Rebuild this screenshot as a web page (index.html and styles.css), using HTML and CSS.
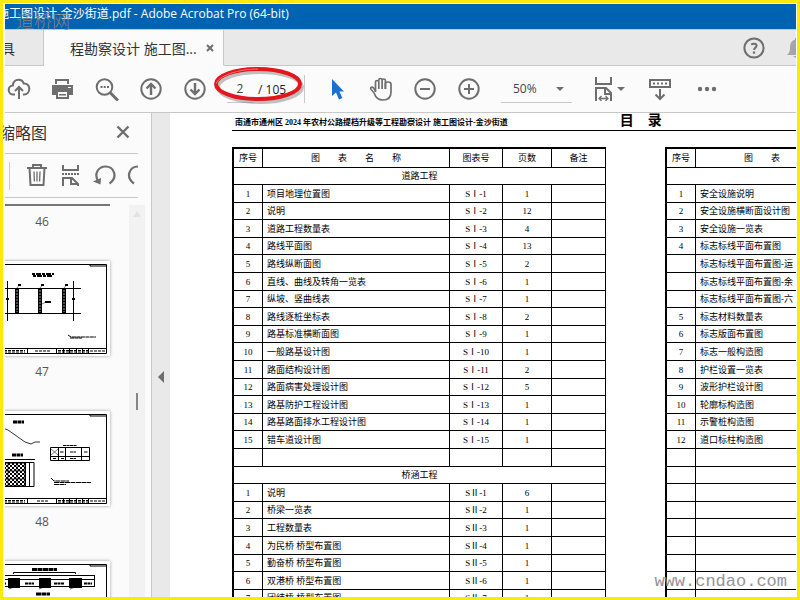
FILE: index.html
```html
<!doctype html>
<html lang="zh-CN">

<head>
    <meta charset="utf-8">
    <meta name="viewport" content="width=device-width, initial-scale=1">
    <title>施工图设计-金沙街道.pdf - Adobe Acrobat Pro (64-bit)</title>
    <link rel="stylesheet" href="styles.css">
</head>

<body>
    <div class="window">
        <header class="titlebar">施工图设计-金沙街道.pdf - Adobe Acrobat Pro (64-bit)</header>

        <nav class="tabs">
            <button type="button" class="tab tab-tools">具</button>
            <div class="tab tab-active">
                <span>程勘察设计 施工图...</span>
                <button type="button" class="tab-close" aria-label="关闭">
                    <svg width="8" height="8" viewBox="0 0 8 8"><path d="M1 1l6 6M7 1l-6 6" stroke="#6e6e6e" stroke-width="2"/></svg>
                </button>
            </div>
            <div class="tabs-right">
                <button type="button" class="icon" aria-label="帮助">
                    <svg width="24" height="24" viewBox="0 0 24 24" fill="none" stroke="#6e6e6e" stroke-width="2">
                        <circle cx="12" cy="12" r="9.6"/>
                        <path d="M9.2 8.6c1.8-1.3 5.4-1.2 5.4 1.1 0 1.900-2.500 2-2.500 4.200"/>
                        <path d="M12 15.500v2.200" stroke-width="2.200"/>
                    </svg>
                </button>
                <button type="button" class="icon" aria-label="通知">
                    <svg width="24" height="24" viewBox="0 0 24 24" fill="#a5a5a5">
                        <path d="M0 19c2-2 3-3 3-8 0-4 2-6.500 5-7.200V2h3v1.800c3 .7 5 3.200 5 7.200 0 5 1 6 3 8z"/>
                        <path d="M6 20h7l-3.500 2.500z"/>
                    </svg>
                </button>
            </div>
        </nav>

        <div class="toolbar">
            <button type="button" class="icon" aria-label="上传">
                <svg width="24" height="24" viewBox="0 0 24 24" fill="none" stroke="#6e6e6e" stroke-width="2">
                    <path d="M8 17.500H6.500a4.500 4.500 0 0 1-.6-9C6 5 8.500 2.800 11.500 2.800c2.500 0 4.500 1.500 5.200 3.700 3.300-.3 5.600 2 5.600 5.200 0 3.300-2.200 5.800-5.300 5.800h-1"/>
                    <path d="M12 22V10.500M8 14l4-4 4 4"/>
                </svg>
            </button>
            <button type="button" class="icon" aria-label="打印">
                <svg width="24" height="24" viewBox="0 0 24 24" fill="#6e6e6e">
                    <path d="M4 2h14v5H4z"/>
                    <path d="M1 8h21v10h-4v-4H5v4H1z"/>
                    <path d="M5 14h13v8H5z"/>
                    <path d="M6 4h10v3H6zM7 15h9v5H7z" fill="#fbfbfb"/>
                    <path d="M8 17h7v1.500H8z"/>
                    <path d="M17 10h3v1h-3z" fill="#fbfbfb"/>
                </svg>
            </button>
            <button type="button" class="icon" aria-label="查找">
                <svg width="24" height="24" viewBox="0 0 24 24" fill="none" stroke="#6e6e6e" stroke-width="2">
                    <circle cx="9.500" cy="10" r="7.800"/>
                    <path d="M15 15.500l8 8" stroke-width="3"/>
                    <path d="M5.500 10h2M8.700 10h2M12 10h2"/>
                </svg>
            </button>
            <button type="button" class="icon" aria-label="上一页">
                <svg width="24" height="24" viewBox="0 0 24 24" fill="none" stroke="#6e6e6e" stroke-width="2">
                    <circle cx="12" cy="12" r="9.700"/>
                    <path d="M12 18V7M7.500 11.500L12 7l4.500 4.500" stroke-width="2.400"/>
                </svg>
            </button>
            <button type="button" class="icon" aria-label="下一页">
                <svg width="24" height="24" viewBox="0 0 24 24" fill="none" stroke="#6e6e6e" stroke-width="2">
                    <circle cx="12" cy="12" r="9.700"/>
                    <path d="M12 6v11M7.500 12.500L12 17l4.500-4.500" stroke-width="2.400"/>
                </svg>
            </button>

            <div class="pager">
                <input type="text" id="page" class="page-input" value="2" aria-label="页码">
                <label for="page">/ 105</label>
                <svg class="mark" width="100" height="48" viewBox="0 0 100 48" fill="none">
                    <ellipse cx="50" cy="24" rx="42" ry="15" stroke="#777" stroke-opacity=".45" stroke-width="4"/>
                    <ellipse cx="48" cy="21" rx="42" ry="15" stroke="#e4151b" stroke-width="4"/>
                    <path d="M6 21c2-8 22-15 42-15" stroke="#f77779" stroke-width="1"/>
                </svg>
            </div>

            <button type="button" class="icon" aria-label="选择">
                <svg width="24" height="24" viewBox="0 0 24 24" fill="#1a70cc">
                    <path d="M7 2v17l4-3.500 3 7 3.400-1.400-3-6.600H19z"/>
                </svg>
            </button>
            <button type="button" class="icon" aria-label="手形工具">
                <svg width="24" height="24" viewBox="0 0 24 24" fill="none" stroke="#6e6e6e" stroke-width="1.700">
                    <path d="M6.500 15V5c0-2 3.300-2 3.300 0v7V3c0-2 3.300-2 3.300 0v9V3.500c0-2 3.300-2 3.300 0V12"/>
                    <path d="M16.400 12V6.500c0-2 5.600-2.200 5.600.5v8c0 5-3 8-8 8-5.500 0-7.500-3-8.700-6.500-.6-2-5-4.500-3.300-6 2-1.200 3.500 1.500 4.500 3.500"/>
                </svg>
            </button>
            <button type="button" class="icon" aria-label="缩小">
                <svg width="24" height="24" viewBox="0 0 24 24" fill="none" stroke="#6e6e6e" stroke-width="2">
                    <circle cx="12" cy="12" r="9.700"/>
                    <path d="M7 12h10"/>
                </svg>
            </button>
            <button type="button" class="icon" aria-label="放大">
                <svg width="24" height="24" viewBox="0 0 24 24" fill="none" stroke="#6e6e6e" stroke-width="2">
                    <circle cx="12" cy="12" r="9.700"/>
                    <path d="M7 12h10M12 7v10"/>
                </svg>
            </button>

            <div class="zoom">
                <select aria-label="缩放">
                    <option>50%</option>
                </select>
                <svg width="8" height="4" viewBox="0 0 8 4"><path d="M0 0h8L4 4z" fill="#6e6e6e"/></svg>
            </div>

            <button type="button" class="icon icon-caret" aria-label="适合宽度">
                <svg width="24" height="24" viewBox="0 0 24 24" fill="none" stroke="#6e6e6e" stroke-width="2">
                    <path d="M4 0v7h15V0"/>
                    <path d="M4 24V11h10l5 5v8M13 11v6h6"/>
                    <path d="M7 21.500h9M9.500 19L7 21.500 9.500 24M13.500 19l2.500 2.500-2.500 2.500" stroke-width="1.300"/>
                </svg>
                <svg width="8" height="4" viewBox="0 0 8 4"><path d="M0 0h8L4 4z" fill="#6e6e6e"/></svg>
            </button>
            <button type="button" class="icon" aria-label="滚动">
                <svg width="24" height="24" viewBox="0 0 24 24" fill="none" stroke="#6e6e6e" stroke-width="2">
                    <path d="M2 3h20v7H2z"/>
                    <path d="M5 6.500h14" stroke-dasharray="2 2"/>
                    <path d="M12 12v10M7.500 17.500L12 22l4.500-4.500"/>
                </svg>
            </button>
            <button type="button" class="icon icon-more" aria-label="更多">
                <svg width="24" height="24" viewBox="0 0 24 24" fill="#6e6e6e">
                    <circle cx="4" cy="12" r="2.200"/><circle cx="11" cy="12" r="2.200"/><circle cx="18" cy="12" r="2.200"/>
                </svg>
            </button>
        </div>

        <div class="main">
            <aside class="sidebar">
                <div class="side-head">
                    <h2>缩略图</h2>
                    <button type="button" class="icon" aria-label="关闭面板">
                        <svg width="24" height="24" viewBox="0 0 24 24"><path d="M6.500 5.500l11 11M17.500 5.500l-11 11" stroke="#6e6e6e" stroke-width="2.400"/></svg>
                    </button>
                </div>
                <div class="side-tools">
                    <button type="button" class="icon" aria-label="删除">
                        <svg width="24" height="24" viewBox="0 0 24 24" fill="none" stroke="#6e6e6e" stroke-width="2">
                            <path d="M2 4h20M8 4V1h8v3M4.500 4l1 17h13l1-17"/>
                            <path d="M9 7.500l.4 10M12 7.500v10M15 7.500l-.4 10" stroke-width="1.300"/>
                        </svg>
                    </button>
                    <button type="button" class="icon" aria-label="拆分">
                        <svg width="24" height="24" viewBox="0 0 24 24" fill="none" stroke="#6e6e6e" stroke-width="2">
                            <path d="M4 1v5h15V1"/>
                            <path d="M3 10h17" stroke-dasharray="2 1"/>
                            <path d="M4 22v-8h9l6 6v2M12 14v6h7"/>
                        </svg>
                    </button>
                    <button type="button" class="icon" aria-label="逆时针旋转">
                        <svg width="24" height="24" viewBox="0 0 24 24" fill="none" stroke="#6e6e6e" stroke-width="2.200">
                            <path d="M5 17C0.500 9 6 2.500 12.500 2.500c8.500 0 13 10.500 4 17"/>
                            <path d="M0 17.500l8-3.500-.5 6.500z" fill="#6e6e6e" stroke="none"/>
                        </svg>
                    </button>
                    <button type="button" class="icon" aria-label="顺时针旋转">
                        <svg width="24" height="24" viewBox="0 0 24 24" fill="none" stroke="#6e6e6e" stroke-width="2.200">
                            <path d="M7 19.500C-2 13 2.500 2.500 11 2.500c7 0 12 6.500 7.500 14.500"/>
                        </svg>
                    </button>
                </div>
                <div class="side-body">
                    <div class="thumbs">
                        <figure>
                            <svg width="136" height="95" viewBox="-26 0 136 95"><path d="M-26 94h136" stroke="#777" stroke-width="2"/></svg>
                            <figcaption>46</figcaption>
                        </figure>
                        <figure>
                            <svg width="136" height="95" viewBox="-26 0 136 95" fill="none" stroke="#000">
                                <path d="M-22 3.500H106.500V92.500H-22M-22 87.500H106M90 3v2h16" />
                                <path d="M32 13h22M33 15h20" stroke-width="2" stroke-dasharray="3 1 5 1"/>
                                <path d="M0 27.500h81M0 52.500h81M7.500 20v40M73.500 20v40"/>
                                <path d="M17 27v25M40 27v25M64 27v25" stroke-width="4"/>
                                <path d="M17 29v22M40 29v22M64 29v22" stroke="#999" stroke-dasharray="2 1"/>
                                <path d="M17 27l3-4M40 27l3-4M64 27l3-4M42 43l4-2" stroke-width=".5"/>
                                <path d="M18 24h3M41 24h3M65 24h3M45 41h6M6 38h3M72 38h3" stroke-width="2"/>
                                <path d="M68 74l3 2h25M70 77h12" stroke-dasharray="4 .5"/>
                                <path d="M0 89.500h25M0 91h25M35 90h15M58 89.500h31M58 91h31M90 90h15" stroke-dasharray="3 1"/>
                                <path d="M27.500 87v5M56.500 87v5M63.500 87v5M69.500 87v5M76.500 87v5M82.500 87v5M88.500 87v5"/>
                            </svg>
                            <figcaption>47</figcaption>
                        </figure>
                        <figure>
                            <svg width="136" height="95" viewBox="-26 0 136 95" fill="none" stroke="#000">
                                <defs>
                                    <pattern id="hatch" width="4" height="4" patternUnits="userSpaceOnUse"><path d="M0 0h2v2H0zM2 2h2v2H2z" fill="#000" stroke="none"/></pattern>
                                </defs>
                                <path d="M-22 3.500H106.500V92.500H-22M-22 87.500H106M90 3v2h16" />
                                <path d="M13 11h11M12 44h11" stroke-width="3" stroke-dasharray="4 .5"/>
                                <path d="M0 16l8 3 17 12 6 2 4-2h5" stroke-width=".8"/>
                                <path d="M0 48.500h35M0 51.500h34v24H0M25.500 51v24M29.500 51v24"/>
                                <path d="M0 52h25v23H0z" fill="url(#hatch)"/>
                                <path d="M8 52v23M17 52v23M0 60h25M0 68h25" stroke-width=".7"/>
                                <path d="M50.500 36.500h39v13h-39zM50 45.500h40M58.500 36v13M65.500 36v13M81.500 36v13"/>
                                <path d="M63 34.500h14M60 41h4M70 41h6M84 41h4M53 47.500h3M61 47.500h3M70 47.500h6" stroke-dasharray="3 .5"/>
                                <path d="M51 38l7 6M58 38l-7 6" stroke-width=".5"/>
                                <path d="M51 67l3 3h15M54 71.500h37M54 73.500h12" stroke-dasharray="5 .5"/>
                                <path d="M0 89.500h25M0 91h25M37 90h11M58 89.500h31M58 91h31M90 90h15" stroke-dasharray="3 1"/>
                                <path d="M27.500 87v5M56.500 87v5M63.500 87v5M69.500 87v5M76.500 87v5M82.500 87v5M88.500 87v5"/>
                            </svg>
                            <figcaption>48</figcaption>
                        </figure>
                        <figure>
                            <svg width="136" height="95" viewBox="-26 0 136 95" fill="none" stroke="#000">
                                <path d="M-22 3.500H106.500V92.500H-22M90 3v2h16" />
                                <path d="M32 8.500h25M36 33h14" stroke-width="3" stroke-dasharray="5 .5"/>
                                <path d="M13.500 13v-1.500h62V13M0 14.500h95M0 18.500h95M0 25.500h95M94.500 14v11"/>
                                <path d="M8 22h12M39 22h12M69 22h13" stroke-width="10"/>
                                <path d="M0 22.500h6M25 22.500h9M54 22.500h10M84 22.500h8" stroke-width="2" stroke-dasharray="3 .5"/>
                                <path d="M9 28l5-2M39 28l5-2M70 28l5-2" stroke-width=".6"/>
                            </svg>
                        </figure>
                    </div>
                    <div class="scrollbar">
                        <svg width="8" height="6" viewBox="0 0 8 6"><path d="M0 6h8L4 0z" fill="#e2e2e2"/></svg>
                        <span class="scroll-thumb"></span>
                    </div>
                </div>
            </aside>

            <div class="splitter">
                <button type="button" aria-label="折叠">
                    <svg width="6" height="12" viewBox="0 0 6 12"><path d="M6 0v12L0 6z" fill="#6e6e6e"/></svg>
                </button>
            </div>

            <main class="document">
                <div class="doc-head">
                    <p>南通市通州区 2024 年农村公路提档升级等工程勘察设计 施工图设计-金沙街道</p>
                    <h1>目　录</h1>
                </div>
                <div class="sheets">
                    <table>
                        <thead>
                            <tr><th class="c-no">序号</th><th class="c-name">图　　表　　名　　称</th><th class="c-code">图表号</th><th class="c-pages">页数</th><th class="c-note">备注</th></tr>
                        </thead>
                        <tbody>
                            <tr><td colspan="5" class="section">道路工程</td></tr>
                            <tr><td>1</td><td>项目地理位置图</td><td>SⅠ-1</td><td>1</td><td></td></tr>
                            <tr><td>2</td><td>说明</td><td>SⅠ-2</td><td>12</td><td></td></tr>
                            <tr><td>3</td><td>道路工程数量表</td><td>SⅠ-3</td><td>4</td><td></td></tr>
                            <tr><td>4</td><td>路线平面图</td><td>SⅠ-4</td><td>13</td><td></td></tr>
                            <tr><td>5</td><td>路线纵断面图</td><td>SⅠ-5</td><td>2</td><td></td></tr>
                            <tr><td>6</td><td>直线、曲线及转角一览表</td><td>SⅠ-6</td><td>1</td><td></td></tr>
                            <tr><td>7</td><td>纵坡、竖曲线表</td><td>SⅠ-7</td><td>1</td><td></td></tr>
                            <tr><td>8</td><td>路线逐桩坐标表</td><td>SⅠ-8</td><td>2</td><td></td></tr>
                            <tr><td>9</td><td>路基标准横断面图</td><td>SⅠ-9</td><td>1</td><td></td></tr>
                            <tr><td>10</td><td>一般路基设计图</td><td>SⅠ-10</td><td>1</td><td></td></tr>
                            <tr><td>11</td><td>路面结构设计图</td><td>SⅠ-11</td><td>2</td><td></td></tr>
                            <tr><td>12</td><td>路面病害处理设计图</td><td>SⅠ-12</td><td>5</td><td></td></tr>
                            <tr><td>13</td><td>路基防护工程设计图</td><td>SⅠ-13</td><td>1</td><td></td></tr>
                            <tr><td>14</td><td>路基路面排水工程设计图</td><td>SⅠ-14</td><td>1</td><td></td></tr>
                            <tr><td>15</td><td>错车道设计图</td><td>SⅠ-15</td><td>1</td><td></td></tr>
                            <tr><td></td><td></td><td></td><td></td><td></td></tr>
                            <tr><td colspan="5" class="section">桥涵工程</td></tr>
                            <tr><td>1</td><td>说明</td><td>SⅡ-1</td><td>6</td><td></td></tr>
                            <tr><td>2</td><td>桥梁一览表</td><td>SⅡ-2</td><td>1</td><td></td></tr>
                            <tr><td>3</td><td>工程数量表</td><td>SⅡ-3</td><td>1</td><td></td></tr>
                            <tr><td>4</td><td>为民桥 桥型布置图</td><td>SⅡ-4</td><td>1</td><td></td></tr>
                            <tr><td>5</td><td>勤奋桥 桥型布置图</td><td>SⅡ-5</td><td>1</td><td></td></tr>
                            <tr><td>6</td><td>双港桥 桥型布置图</td><td>SⅡ-6</td><td>1</td><td></td></tr>
                            <tr><td>7</td><td>团结桥 桥型布置图</td><td>SⅡ-7</td><td>1</td><td></td></tr>
                        </tbody>
                    </table>

                    <table>
                        <thead>
                            <tr><th class="c-no">序号</th><th class="c-name">图　　表　　名　　称</th></tr>
                        </thead>
                        <tbody>
                            <tr><td colspan="2" class="section"></td></tr>
                            <tr><td>1</td><td>安全设施说明</td></tr>
                            <tr><td>2</td><td>安全设施横断面设计图</td></tr>
                            <tr><td>3</td><td>安全设施一览表</td></tr>
                            <tr><td>4</td><td>标志标线平面布置图</td></tr>
                            <tr><td></td><td>标志标线平面布置图-运</td></tr>
                            <tr><td></td><td>标志标线平面布置图-余</td></tr>
                            <tr><td></td><td>标志标线平面布置图-六</td></tr>
                            <tr><td>5</td><td>标志材料数量表</td></tr>
                            <tr><td>6</td><td>标志版面布置图</td></tr>
                            <tr><td>7</td><td>标志一般构造图</td></tr>
                            <tr><td>8</td><td>护栏设置一览表</td></tr>
                            <tr><td>9</td><td>波形护栏设计图</td></tr>
                            <tr><td>10</td><td>轮廓标构造图</td></tr>
                            <tr><td>11</td><td>示警桩构造图</td></tr>
                            <tr><td>12</td><td>道口标柱构造图</td></tr>
                            <tr><td></td><td></td></tr>
                            <tr><td></td><td></td></tr>
                            <tr><td></td><td></td></tr>
                            <tr><td></td><td></td></tr>
                            <tr><td></td><td></td></tr>
                            <tr><td></td><td></td></tr>
                            <tr><td></td><td></td></tr>
                            <tr><td></td><td></td></tr>
                            <tr><td></td><td></td></tr>
                        </tbody>
                    </table>
                </div>
            </main>
        </div>

        <span class="stamp stamp-name">道桥网</span>
        <span class="stamp stamp-url">www.cndao.com</span>
    </div>
</body>

</html>
```

FILE: styles.css
```css
* {
    box-sizing: border-box;
}

body {
    margin: 0;
    font-family: "Open Sans", "Noto Sans CJK SC", sans-serif;
    font-size: 12px;
    color: #333;
}

button {
    padding: 0;
    border: none;
    background: none;
    font: inherit;
    color: inherit;
    cursor: pointer;
}

svg {
    display: block;
    flex: none;
}

.window {
    position: relative;
    display: flex;
    flex-direction: column;
    height: 100vh;
    padding: 1px 1px 0 2px;
    border: 3px solid #ffe90a;
    background: #fff;
    overflow: hidden;
}

.titlebar {
    flex: none;
    height: 25px;
    line-height: 20px;
    text-indent: -8px;
    background: #0063b1;
    color: #fff;
    white-space: nowrap;
    overflow: hidden;
}

/* tabs */
.tabs {
    display: flex;
    flex: none;
    height: 37px;
    border-top: 1px solid #c8c8c8;
    background: #e9e9e9;
    font-size: 14px;
    overflow: hidden;
}

.tab {
    display: flex;
    align-items: center;
    white-space: nowrap;
    border-right: 1px solid #c8c8c8;
    border-bottom: 1px solid #c8c8c8;
}

.tab-tools {
    width: 39px;
    text-indent: -4px;
}

.tab-active {
    width: 180px;
    padding-left: 26px;
    gap: 9px;
    border-bottom-color: #fbfbfb;
    background: #fbfbfb;
}

.tabs-right {
    display: flex;
    flex: 1;
    justify-content: flex-end;
    align-items: center;
    gap: 21px;
    margin-right: -15px;
    border-bottom: 1px solid #c8c8c8;
}

.icon {
    flex: none;
    width: 24px;
    height: 24px;
}

/* toolbar */
.toolbar {
    display: flex;
    flex: none;
    align-items: center;
    gap: 20px;
    height: 47px;
    padding-left: 2px;
    border-bottom: 1px solid #c8c8c8;
    background: #fbfbfb;
}

.pager {
    position: relative;
    display: flex;
    align-items: center;
    gap: 5px;
    width: 78px;
    height: 28px;
    border-right: 1px solid #c8c8c8;
    color: #222;
}

.page-input {
    width: 26px;
    height: 28px;
    padding: 0;
    border: none;
    border-bottom: 1px solid #c8c8c8;
    background: none;
    font: inherit;
    color: #444;
    text-align: center;
}

/* red ring round the page number */
.mark {
    position: absolute;
    left: -17px;
    top: -12px;
    pointer-events: none;
}

.zoom {
    display: flex;
    align-items: center;
    width: 71px;
    height: 28px;
    border-bottom: 1px solid #c8c8c8;
}

.zoom select {
    width: 55px;
    padding: 0 0 0 12px;
    appearance: none;
    border: none;
    background: none;
    font: inherit;
    color: #444;
}

.icon-caret {
    display: flex;
    align-items: center;
    gap: 1px;
    width: 36px;
}

.icon-more {
    display: flex;
    justify-content: flex-end;
    width: 28px;
}

.main {
    display: flex;
    flex: 1;
    min-height: 0;
}

/* page thumbnails */
.sidebar {
    display: flex;
    flex-direction: column;
    flex: none;
    width: 147px;
    border-right: 1px solid #c8c8c8;
    background: #fbfbfb;
}

.side-head,
.side-tools {
    display: flex;
    flex: none;
    align-items: center;
    margin-right: 13px;
    border-bottom: 1px solid #c8c8c8;
}

.side-head {
    justify-content: space-between;
    height: 41px;
    padding-right: 3px;
}

.side-head h2 {
    margin: 0 0 0 -6px;
    font-size: 16px;
    font-weight: normal;
    line-height: 24px;
}

.side-tools {
    gap: 10px;
    height: 44px;
    overflow: hidden;
}

.side-tools::before {
    content: "";
    flex: none;
    width: 1px;
    height: 28px;
    margin: 0 5px 0 4px;
    background: #c8c8c8;
}

.side-body {
    display: flex;
    flex: 1;
    justify-content: space-between;
    min-height: 0;
    padding-right: 6px;
    overflow: hidden;
}

.thumbs {
    margin: -87px 0 0 -31px;
}

.thumbs figure {
    height: 150px;
    margin: 0;
}

.thumbs figure svg {
    background: #fff;
    box-shadow: 0 0 3px #999;
}

.thumbs figure:first-child svg {
    background: none;
    box-shadow: none;
}

.thumbs figcaption {
    line-height: 32px;
    text-align: center;
    color: #555;
}

.scrollbar {
    display: flex;
    flex-direction: column;
    align-items: center;
    width: 16px;
    margin-top: 7px;
    padding-top: 6px;
    background: #f2f2f2;
}

.scroll-thumb {
    width: 2px;
    height: 17px;
    margin-top: 176px;
    background: #858585;
}

.splitter {
    flex: none;
    width: 18px;
    padding: 258px 0 0 6px;
    background: #e9e9e9;
}

.splitter button {
    display: block;
}

/* document */
.document {
    flex: 1;
    min-width: 0;
    padding-left: 62px;
    background: #fff;
    color: #000;
    font-family: "Liberation Serif", "Noto Sans CJK SC", serif;
    overflow: hidden;
}

.doc-head {
    display: flex;
    gap: 112px;
    height: 18px;
    padding-left: 3px;
    border-bottom: 1px solid #000;
    white-space: nowrap;
}

.doc-head p {
    margin: 0;
    font-size: 8px;
    font-weight: bold;
    line-height: 20px;
}

.doc-head h1 {
    margin: 0;
    font-size: 14px;
    line-height: 16px;
}

.sheets {
    display: flex;
    align-items: flex-start;
    gap: 59px;
    margin-top: 16px;
}

table {
    flex: none;
    border-collapse: separate;
    border-spacing: 0;
    border-top: 2px solid #000;
    border-left: 2px solid #000;
    table-layout: fixed;
    font-size: 9px;
    line-height: 12px;
}

th,
td {
    height: 18px;
    padding: 0;
    border-right: 1px solid #000;
    border-bottom: 1px solid #000;
    font-weight: normal;
    text-align: center;
    white-space: nowrap;
}

th {
    height: 19px;
}

tr:first-child td,
tr:nth-child(5n) td,
tr:nth-child(5n + 3) td {
    height: 17px;
}

td:nth-child(2) {
    padding-left: 4px;
    text-align: left;
}

.c-no {
    width: 29px;
}

.c-name {
    width: 187px;
}

.c-code {
    width: 53px;
}

.c-pages {
    width: 49px;
}

.c-note {
    width: 54px;
}

/* site stamps over the window */
.stamp {
    position: absolute;
    color: #888;
    opacity: .9;
    white-space: nowrap;
    pointer-events: none;
}

.stamp-name {
    left: 13px;
    top: 6px;
    font-size: 18px;
    font-weight: 300;
    line-height: 24px;
}

.stamp-url {
    right: 10px;
    bottom: 3px;
    font-family: "Liberation Mono", monospace;
    font-size: 17px;
    line-height: 24px;
}
```
